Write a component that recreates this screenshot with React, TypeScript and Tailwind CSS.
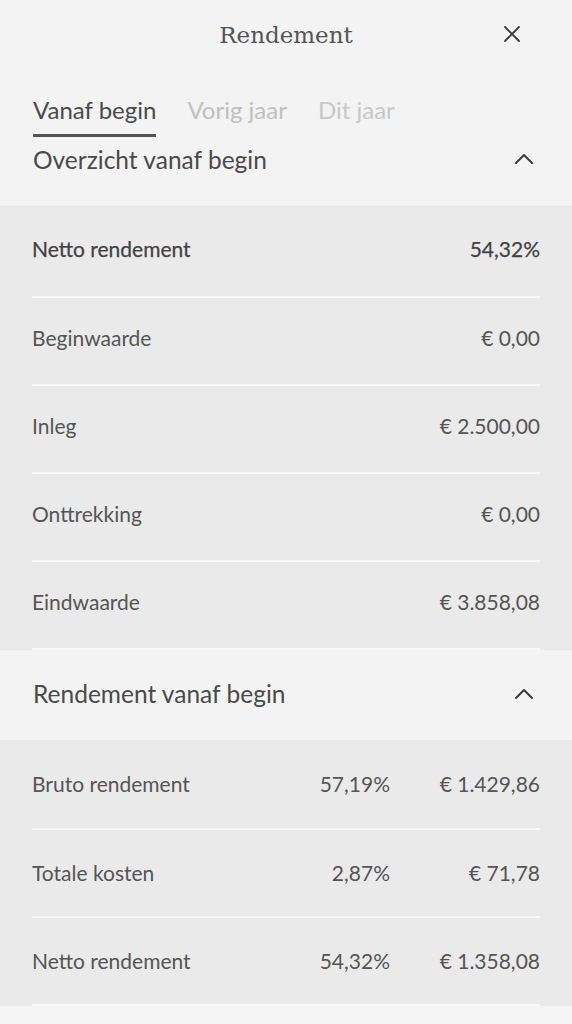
import React from 'react';

const overzicht = [
  { label: 'Netto rendement', value: '54,32%', strong: true },
  { label: 'Beginwaarde', value: '€ 0,00' },
  { label: 'Inleg', value: '€ 2.500,00' },
  { label: 'Onttrekking', value: '€ 0,00' },
  { label: 'Eindwaarde', value: '€ 3.858,08' },
];

const rendement = [
  { label: 'Bruto rendement', pct: '57,19%', value: '€ 1.429,86' },
  { label: 'Totale kosten', pct: '2,87%', value: '€ 71,78' },
  { label: 'Netto rendement', pct: '54,32%', value: '€ 1.358,08' },
];

const ChevronUp = () => (
  <svg width="20" height="12" viewBox="0 0 20 12" fill="none" stroke="#3a3a3a" strokeWidth="2" strokeLinecap="round" strokeLinejoin="round">
    <path d="M2 10 L10 2 L18 10" />
  </svg>
);

const CloseIcon = () => (
  <svg width="18" height="18" viewBox="0 0 18 18" fill="none" stroke="#3a3a3a" strokeWidth="1.8" strokeLinecap="round">
    <path d="M2 2 L16 16 M16 2 L2 16" />
  </svg>
);

const App = () => {
  return (
    <div className="min-h-screen w-full bg-[#f5f5f5] text-[#4a4a4a] font-['Lato','Open_Sans',sans-serif]">
      <div className="bg-[#f3f3f3]">
        <header className="grid h-[68px] grid-cols-[1fr_auto_1fr] items-center">
          <div />
          <h1 className="pt-[2px] font-['DejaVu_Serif',serif] text-[23px] text-[#555]">Rendement</h1>
          <div className="flex justify-end pr-[51px]">
            <CloseIcon />
          </div>
        </header>

        <nav className="flex gap-[31px] px-[33px] pt-[28px]">
          <div className="flex flex-col">
            <span className="text-[24px] leading-[28px]">Vanaf begin</span>
            <div className="mt-[10px] h-[3px] bg-[#555]" />
          </div>
          <span className="text-[24px] leading-[28px] text-[#c0c0c0]">Vorig jaar</span>
          <span className="text-[24px] leading-[28px] text-[#c8c8c8]">Dit jaar</span>
        </nav>

        <div className="flex h-[69px] items-start justify-between pl-[33px] pr-[38px] pt-[9px]">
          <h2 className="text-[24.5px] leading-[28px]">Overzicht vanaf begin</h2>
          <div className="pt-[7px]">
            <ChevronUp />
          </div>
        </div>
      </div>

      <section className="bg-[#eaeaea] px-[32px]">
        {overzicht.map((row, i) => (
          <div
            key={row.label}
            className={`flex items-center justify-between border-b-2 border-[#f8f8f8] text-[21px] ${
              i === 0 ? 'h-[92px] pb-[5px]' : 'h-[88px] pb-[7px]'
            } ${row.strong ? 'text-[#424242] [-webkit-text-stroke:0.25px_#424242]' : 'text-[#555]'}`}
          >
            <span>{row.label}</span>
            <span>{row.value}</span>
          </div>
        ))}
      </section>

      <div className="flex h-[90px] items-center justify-between bg-[#f3f3f3] pb-[2px] pl-[33px] pr-[38px]">
        <h2 className="text-[24.5px]">Rendement vanaf begin</h2>
        <ChevronUp />
      </div>

      <section className="bg-[#eaeaea] px-[32px]">
        {rendement.map((row, i) => (
          <div
            key={row.label}
            className={`flex items-center border-b-2 border-[#f8f8f8] text-[21px] text-[#555] ${
              i === 0 ? 'h-[90px]' : 'h-[88px]'
            }`}
          >
            <span className="flex-1">{row.label}</span>
            <span className="text-right">{row.pct}</span>
            <span className="w-[150px] text-right">{row.value}</span>
          </div>
        ))}
      </section>
    </div>
  );
};

export default App;
